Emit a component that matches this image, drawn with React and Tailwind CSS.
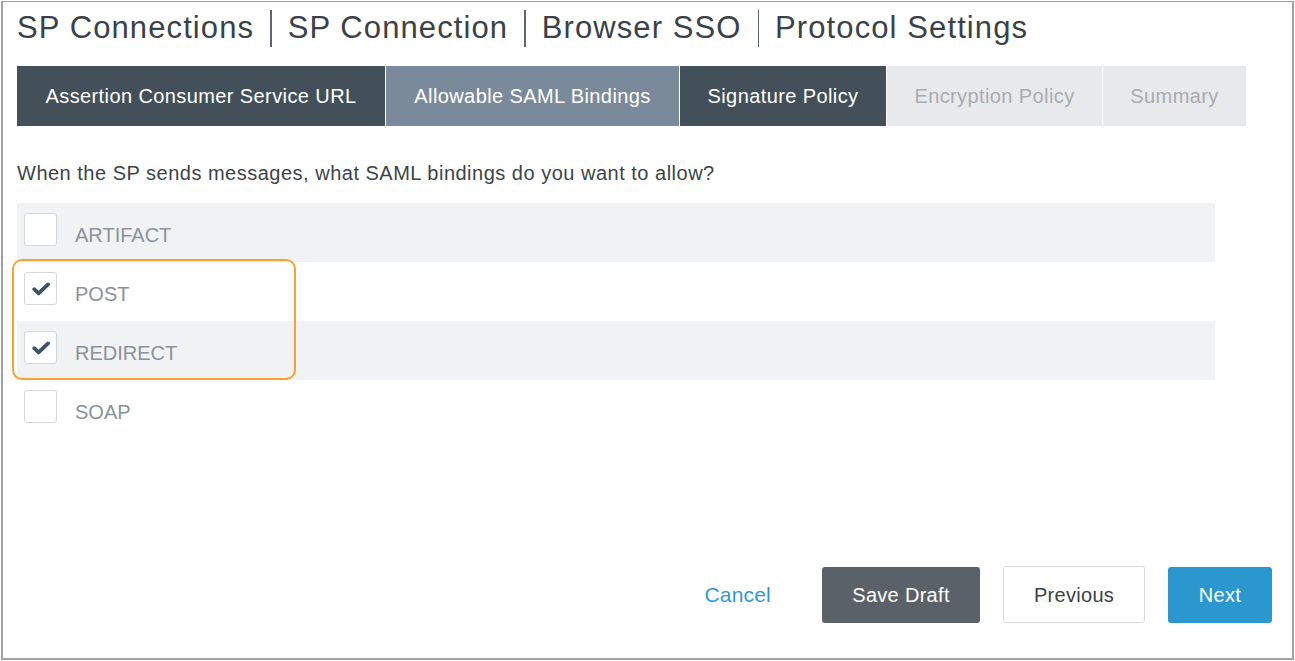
import React from "react";

const font = { fontFamily: '"Liberation Sans", Arial, Helvetica, sans-serif' };

function Check() {
  return (
    <svg width="18" height="14" viewBox="0 0 18 14" className="block">
      <path d="M2.2 7.2 L6.6 11.4 L16 2.4" fill="none" stroke="#3e5366" strokeWidth="3.8" strokeLinecap="round" strokeLinejoin="round" />
    </svg>
  );
}

function Row({ label, checked, gray }) {
  return (
    <div className={`flex h-[59px] items-start pl-[7px] ${gray ? "bg-[#f1f2f4]" : "bg-white"}`}>
      <div className="mt-[10px] flex h-[33px] w-[33px] items-center justify-center rounded-[3px] border border-[#d3d7db] bg-white">
        {checked && <Check />}
      </div>
      <div className="ml-[18px] mt-[20px] text-[20px] leading-[24px] text-[#8b9299]">{label}</div>
    </div>
  );
}

export default function App() {
  const tabs = [
    { t: "Assertion Consumer Service URL", w: "w-[368px]", c: "bg-[#434f59] text-white" },
    { t: "Allowable SAML Bindings", w: "w-[293px]", c: "bg-[#7b8a9a] text-white" },
    { t: "Signature Policy", w: "w-[206px]", c: "bg-[#434f59] text-white" },
    { t: "Encryption Policy", w: "w-[215px]", c: "bg-[#e8e9eb] text-[#a8acb0]" },
    { t: "Summary", w: "w-[143px]", c: "bg-[#e8e9eb] text-[#a8acb0]" },
  ];
  const crumbs = ["SP Connections", "SP Connection", "Browser SSO", "Protocol Settings"];
  return (
    <div className="h-[661px] w-[1295px] bg-white p-px" style={font}>
      <div className="relative flex h-full w-full flex-col border-b-2 border-l-2 border-r-2 border-t border-[#a0a0a0] pl-[14px]">
        <div className="flex h-[52px] items-center text-[31px] tracking-[1.1px] text-[#3a4248]">
          {crumbs.map((c, i) => (
            <React.Fragment key={c}>
              {i > 0 && <div className="mx-[16px] h-[37px] w-[1.5px] bg-[#5f676e]" />}
              <span className="whitespace-nowrap">{c}</span>
            </React.Fragment>
          ))}
        </div>
        <div className="mt-[12px] flex gap-px">
          {tabs.map((t) => (
            <div key={t.t} className={`flex h-[60px] items-center justify-center whitespace-nowrap text-[20px] tracking-[0.4px] ${t.w} ${t.c}`}>
              {t.t}
            </div>
          ))}
        </div>
        <div className="mt-[35px] text-[20px] leading-[24px] tracking-[0.5px] text-[#3c4449]">
          When the SP sends messages, what SAML bindings do you want to allow?
        </div>
        <div className="relative mt-[18px] w-[1198px]">
          <Row label="ARTIFACT" gray />
          <Row label="POST" checked />
          <Row label="REDIRECT" checked gray />
          <Row label="SOAP" />
          <div className="absolute left-[-5px] top-[56px] h-[121px] w-[284px] rounded-[10px] border-2 border-[#f7a130]" />
        </div>
        <div className="mt-[127px] flex items-center justify-end pr-[20px] text-[20px] tracking-[0.3px]">
          <span className="mr-[51px] text-[21px] tracking-[0.2px] text-[#2e9bd6]">Cancel</span>
          <div className="flex h-[56px] w-[158px] items-center justify-center rounded-[3px] bg-[#5a6168] text-white">Save Draft</div>
          <div className="ml-[23px] flex h-[57px] w-[142px] items-center justify-center rounded-[3px] border border-[#d8dbde] bg-white text-[#3b4146]">Previous</div>
          <div className="ml-[23px] flex h-[56px] w-[104px] items-center justify-center rounded-[3px] bg-[#2b97cf] text-white">Next</div>
        </div>
      </div>
    </div>
  );
}
